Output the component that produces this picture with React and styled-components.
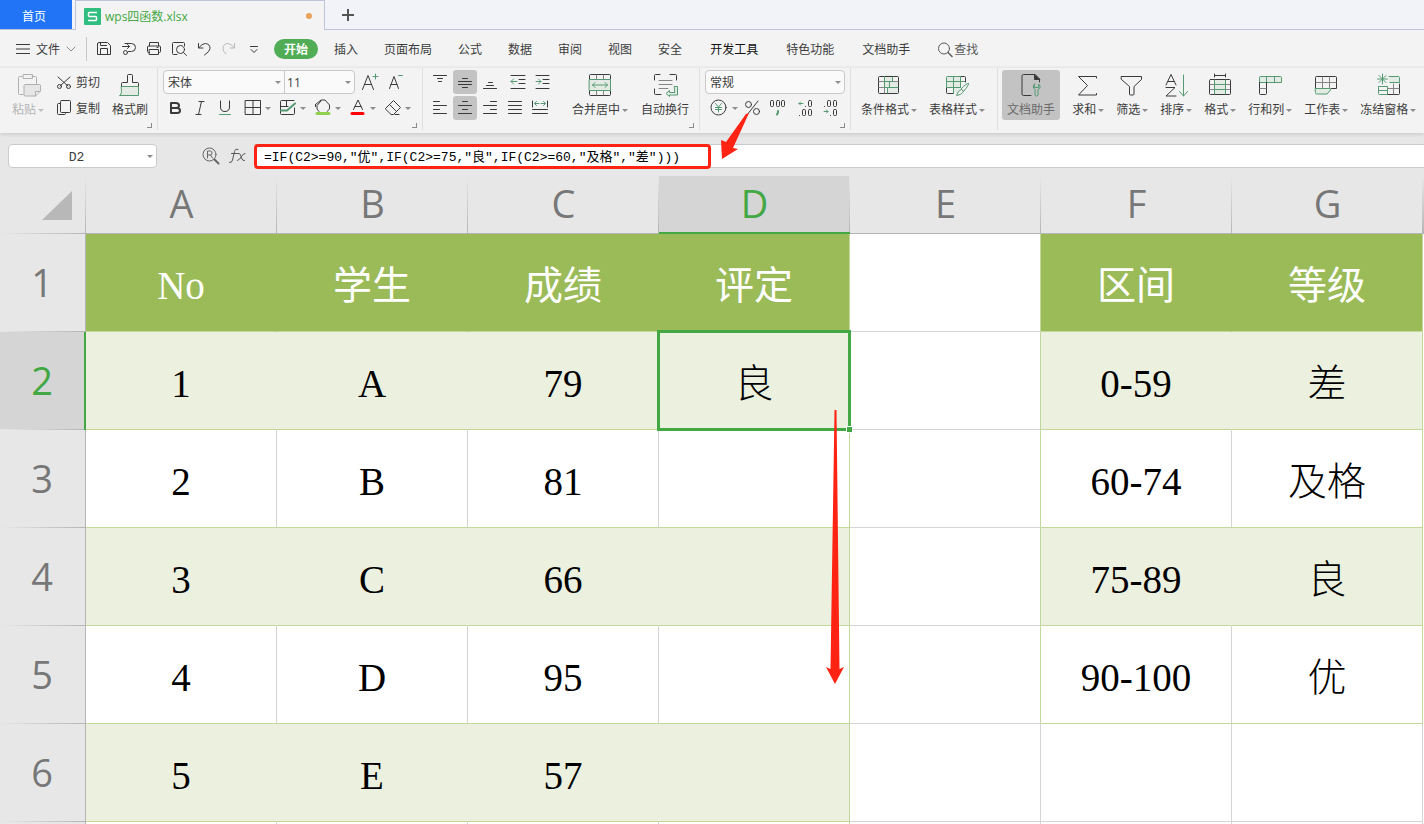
import {useState} from "react";
import styled, {createGlobalStyle} from "styled-components";

const DARK = '#3a3a3a';
const GREEN = '#559a73';
const TINT = '#e3ebe4';

const GlobalStyle = createGlobalStyle`
    * {
        box-sizing: border-box;
    }
    body {
        margin: 0;
        overflow: hidden;
        font-family: "Open Sans", "Noto Sans CJK SC", sans-serif;
        font-size: 12px;
        color: #3c3c3c;
    }
    button, input, select {
        font: inherit;
        color: inherit;
        border: none;
        background: none;
        padding: 0;
        margin: 0;
        outline: none;
    }
`

const AppWrapper = styled.div`
    position: relative;
    height: 100vh;
    display: flex;
    flex-direction: column;
    overflow: hidden;
    background: #e7e7e7;
`

/* document tabs */

const TabBar = styled.div`
    display: flex;
    flex-shrink: 0;
    height: 30px;
    background: linear-gradient(#bfc5d8, #bfc5d8) bottom / 100% 1px no-repeat #f2f3f8;
`

const HomeTab = styled.button`
    width: 72px;
    height: 29px;
    padding: 2px 4px 0 0;
    background: #2074f5;
    color: #ffffff;
`

const FileTab = styled.div`
    width: 250px;
    margin-left: 3px;
    padding: 1px 12px 0 8px;
    display: flex;
    align-items: center;
    gap: 4px;
    border: 1px solid #bfc5d8;
    border-bottom: none;
    background: #f3f3f3;
`

const FileName = styled.span`
    flex: 1;
    color: #43a843;
`

const UnsavedDot = styled.span`
    width: 6px;
    height: 6px;
    border-radius: 50%;
    background: #e8a159;
`

const NewTab = styled.button`
    width: 46px;
    height: 30px;
    display: flex;
    align-items: center;
    justify-content: center;
`

/* menu row */

const MenuBar = styled.div`
    display: flex;
    flex-shrink: 0;
    align-items: center;
    height: 38px;
    padding-left: 16px;
    background: #f3f3f3;
    white-space: nowrap;
`

const FileMenu = styled.button`
    display: flex;
    align-items: center;
    gap: 6px;
    height: 24px;
    padding-right: 10px;
    border-right: 1px solid #c8c8c8;
`

const QuickTools = styled.div`
    display: flex;
    gap: 1px;
    padding: 0 8px 0 5px;
`

const MenuTabs = styled.nav`
    display: flex;
    align-items: center;
    gap: ${props => props.$wide ? '28px' : '26px'};
    padding-left: ${props => props.$wide ? '28px' : 0};
`

const MenuTab = styled.button`
    height: 20px;
    line-height: 18px;
    padding-top: 2px;
    color: ${props => props.$dark ? '#111111' : '#3c3c3c'};
`

const ActiveMenuTab = styled(MenuTab)`
    width: 44px;
    margin-right: 16px;
    border-radius: 10px;
    background: #50ad55;
    color: #ffffff;
    font-weight: 600;
`

const SearchButton = styled(MenuTab)`
    display: flex;
    align-items: center;
    gap: 1px;
    color: #5a5a5a;
`

/* ribbon */

const Ribbon = styled.div`
    position: relative;
    z-index: 1;
    display: flex;
    flex-shrink: 0;
    height: 65px;
    background: #f3f3f3;
    box-shadow: 0 1px 4px #c4c4c4;
    white-space: nowrap;
`

const Group = styled.div`
    position: relative;
    flex-shrink: 0;
    display: flex;
    align-items: flex-start;
    gap: 12px;
    height: 62px;
    padding: 2px ${props => props.$right || '10px'} 0 ${props => props.$left || '5px'};
    border-right: ${props => props.$last ? 'none' : '1px solid #dfdfdf'};
`

const ToolSet = styled.div`
    display: flex;
    gap: 13px;
    padding-left: 8px;
`

const Launcher = styled.span`
    position: absolute;
    right: 5px;
    bottom: 2px;
    width: 5px;
    height: 5px;
    border-right: 1px solid #8a8a8a;
    border-bottom: 1px solid #8a8a8a;
`

const Stack = styled.div`
    display: flex;
    flex-direction: column;
    gap: 2px;
`

const ToolRow = styled.div`
    display: flex;
    gap: ${props => props.$gap || '1px'};
    height: 24px;
`

const IconButton = styled.button`
    width: 24px;
    height: 24px;
    display: flex;
    align-items: center;
    justify-content: center;
    border-radius: 3px;
    background: ${props => props.$active ? '#c3c3c3' : 'none'};
`

const SplitButton = styled.button`
    width: 34px;
    height: 24px;
    padding-left: 3px;
    display: flex;
    align-items: center;
`

const TextButton = styled.button`
    display: flex;
    align-items: center;
    gap: 4px;
    height: 24px;
`

const BigButton = styled.button`
    display: flex;
    flex-direction: column;
    align-items: center;
    gap: 5px;
    height: 50px;
    padding: ${props => props.$active ? '3px 5px 0' : '3px 0 0'};
    border-radius: 3px;
    background: ${props => props.$active ? '#c3c3c3' : 'none'};
    color: ${props => props.$disabled ? '#b4b4b4' : props.$active ? '#6a6a6a' : '#3c3c3c'};
`

const BigLabel = styled.span`
    display: flex;
    align-items: center;
    gap: 2px;
    line-height: 16px;
`

const SelectFrame = styled.div`
    display: flex;
    height: 24px;
    border: 1px solid #c9c9c9;
    border-radius: 4px;
    background: #fafafa;
`

const SelectBox = styled.label`
    position: relative;
    width: ${props => props.$width};
    border-left: ${props => props.$divided ? '1px solid #c9c9c9' : 'none'};
`

const Select = styled.select`
    appearance: none;
    width: 100%;
    height: 22px;
    padding-left: ${props => props.$near ? '2px' : '4px'};
    padding-top: 1px;
    line-height: 21px;
`

const SelectCaret = styled.span`
    position: absolute;
    right: 3px;
    top: 0;
    height: 22px;
    display: flex;
    align-items: center;
    pointer-events: none;
`

/* formula bar */

const FormulaBar = styled.div`
    position: relative;
    z-index: 2;
    display: flex;
    flex-shrink: 0;
    align-items: center;
    height: 43px;
    padding: 3px 0 0 8px;
`

const NameBox = styled.label`
    position: relative;
    width: 149px;
    height: 24px;
    border: 1px solid #cbcbcb;
    border-radius: 4px;
    background: #ffffff;
`

const NameInput = styled.input`
    width: 100%;
    height: 22px;
    padding: 2px 12px 0 0;
    text-align: center;
    font-family: "Liberation Mono", monospace;
    font-size: 13px;
`

const FormulaTools = styled.div`
    display: flex;
    gap: 2px;
    margin: 0 5px 0 42px;
`

const FormulaField = styled.div`
    flex: 1;
    height: 24px;
    border-top: 1px solid #cbcbcb;
    border-bottom: 1px solid #cbcbcb;
    background: #ffffff;
`

const FormulaInput = styled.input`
    display: block;
    width: 457px;
    height: 25px;
    margin-top: -1px;
    padding: 0 7px 3px;
    border: 3px solid #ff2313;
    border-radius: 4px;
    background: #ffffff;
    color: #000000;
    font-family: "Liberation Mono", "Noto Sans CJK SC", monospace;
    font-size: 13px;
`

const FormulaArrow = styled.svg`
    position: absolute;
    left: 720px;
    top: -20px;
    pointer-events: none;
`

/* sheet */

const Sheet = styled.div`
    flex: 1;
    min-height: 0;
    overflow: hidden;
    background: #e7e7e7;
`

const Table = styled.table`
    width: 100%;
    table-layout: fixed;
    border-collapse: separate;
    border-spacing: 0;
`

const RowHeadCol = styled.col`
    width: 86px;
`

const DataCol = styled.col`
    width: 191px;
`

const Corner = styled.th`
    height: 58px;
    padding: 0 14px 14px 0;
    vertical-align: bottom;
    text-align: right;
    line-height: 0;
    background:
        linear-gradient(to right, #e7e7e7, #b5b5b5) bottom / 100% 1px no-repeat,
        linear-gradient(#e7e7e7, #b5b5b5) right / 1px 100% no-repeat;
`

const ColHead = styled.th`
    height: 58px;
    padding: 0 0 4px;
    font-size: 38px;
    line-height: 52px;
    font-weight: 400;
    color: ${props => props.$active ? '#43a843' : '#777777'};
    background:
        linear-gradient(${props => props.$active ? '#43a843, #43a843' : '#b5b5b5, #b5b5b5'}) bottom / 100% ${props => props.$active ? '2px' : '1px'} no-repeat,
        linear-gradient(#e7e7e7, #b5b5b5) right / 1px 100% no-repeat
        ${props => props.$active ? '#d5d5d5' : '#e7e7e7'};
`

const RowHead = styled.th`
    height: 98px;
    padding: 0 2px 2px 0;
    font-size: 38px;
    line-height: 52px;
    font-weight: 400;
    color: ${props => props.$active ? '#43a843' : '#777777'};
    background:
        linear-gradient(${props => props.$active ? '#43a843, #43a843' : '#b5b5b5, #b5b5b5'}) right / ${props => props.$active ? '2px' : '1px'} 100% no-repeat,
        linear-gradient(to right, #e7e7e7, #b5b5b5) bottom / 100% 1px no-repeat
        ${props => props.$active ? '#d5d5d5' : '#e7e7e7'};
`

const fills = {head: '#9bbb59', band: '#ebf0df', plain: '#ffffff'};

const Cell = styled.td`
    position: relative;
    height: 98px;
    padding: 6px 0 0;
    text-align: center;
    font-family: "Liberation Serif", "Noto Sans CJK SC", serif;
    font-size: 39px;
    font-weight: ${props => props.$fill === 'head' ? 400 : 300};
    line-height: 56px;
    color: ${props => props.$fill === 'head' ? '#ffffff' : '#000000'};
    background: ${props => fills[props.$fill]};
    border-right: 1px solid ${props => props.$right};
    border-bottom: 1px solid ${props => props.$bottom};
`

const Filler = styled.td`
    background: #ffffff;
`

const Selection = styled.div`
    position: absolute;
    z-index: 1;
    left: -2px;
    right: -2px;
    top: -2px;
    bottom: -2px;
    border: 3px solid #43a843;
`

const FillHandle = styled.div`
    position: absolute;
    right: -5px;
    bottom: -5px;
    width: 7px;
    height: 7px;
    border: 1px solid #ffffff;
    background: #43a843;
`

const DragArrow = styled.svg`
    position: absolute;
    z-index: 2;
    right: 5px;
    top: 78px;
    pointer-events: none;
`

/* icons: dark strokes with green accents */

const Svg = ({w = 24, h = 24, color = DARK, children}) => (
    <svg width={w} height={h} viewBox={`0 0 ${w} ${h}`} fill="none" stroke={color} strokeLinecap="round" strokeLinejoin="round">
        {children}
    </svg>
);

const Caret = ({color = '#8c8c8c'}) => (
    <svg width="6" height="3" viewBox="0 0 6 3"><path d="M0 0h6L3 3z" fill={color}/></svg>
);

const quickIcons = [
    ['保存', <><path d="M5.500 7v10.500h13V8.500l-3-3h-8.500q-1.500 0-1.500 1.500z"/><path d="M8.500 17.500v-6h7v6M8.500 5.500v3h6"/></>],
    ['输出', <><path d="M8 6.500h6.500a4 4 0 0 1 0 8h-3M5.500 9.500h7M10.500 7.500l2 2-2 2"/><circle cx="8.500" cy="15.500" r="2"/></>],
    ['打印', <><path d="M7.500 9V5.500h9V9M7.500 15.500h-1q-1 0-1-1V10q0-1 1-1h11q1 0 1 1v4.500q0 1-1 1h-1"/><path d="M7.500 12.500h9v5h-9zM15 10.500h1"/></>],
    ['打印预览', <><path d="M17.500 9V6.500q0-1-1-1h-10q-1 0-1 1v10q0 1 1 1H10"/><circle cx="13.500" cy="12.500" r="4"/><path d="M16.500 15.500l3 3"/></>],
    ['撤销', <path d="M6.500 6.500v4.500h4.500M7 10.500q3-4 6.500-4 4.500.5 4.500 5 0 3-5.500 6.500"/>],
    ['恢复', <path stroke="#b9b9b9" d="M17.500 6.500v4.500H13M17 10.500q-3-4-6.500-4-4.500.5-4.500 5 0 3 3 5.500"/>],
    ['更多', <path d="M8.500 9.500h7M9 12.500l3 3 3-3"/>],
];

const hAlign = [
    ['左对齐', <path d="M5.500 5.500h6M5.500 9.500h13M5.500 13.500h6M5.500 17.500h13"/>],
    ['居中', <path d="M9.500 5.500h5M5.500 9.500h13M9.500 13.500h5M5.500 17.500h13"/>],
    ['右对齐', <path d="M12.500 5.500h6M5.500 9.500h13M12.500 13.500h6M5.500 17.500h13"/>],
    ['两端对齐', <path d="M5.500 5.500h13M5.500 9.500h13M5.500 13.500h13M5.500 17.500h13"/>],
    ['分散对齐', <><path d="M4.500 5v6M19.500 5v6M4.500 13.500h15M4.500 17.500h15"/><path stroke={GREEN} d="M7 7.500h4M8.500 5.500l-2 2 2 2M13 7.500h4M15.500 5.500l2 2-2 2"/></>],
];

const vAlign = [
    ['顶端对齐', <path d="M5.500 5.500h13M9.500 8.500h5M10.500 11.500h3"/>],
    ['垂直居中', <path d="M9.500 8.500h5M5.500 11.500h13M5.500 14.500h13M9.500 17.500h5"/>],
    ['底端对齐', <path d="M10.500 12.500h4M8.500 15.500h7M5.500 18.500h13"/>],
    ['减少缩进', <><path d="M8 5.500h14M16 9.500h6M16 13.500h6M8 18.500h14"/><path stroke={GREEN} d="M8 11.500h6M10.500 9l-2.500 2.500 2.500 2.500"/></>],
    ['增加缩进', <><path d="M8 5.500h13M15 9.500h6M15 13.500h6M8 18.500h13"/><path stroke={GREEN} d="M8 11.500h5M10.500 9l2.500 2.500-2.500 2.500"/></>],
];

const penIcons = [
    ['边框', <path d="M4.500 4.500h15v14h-15zM12 4.500v14M4.500 11.500h15"/>],
    ['绘图边框', <><path d="M18.500 12v5.500q0 1-1 1h-12q-1 0-1-1V5.500q0-1 1-1H18M10.500 5v5M4.500 10.500H12"/><path stroke={GREEN} strokeWidth="2" d="M5 14.500h6l8-7"/></>],
    ['填充颜色', <><path d="M4.500 8.500L10 4h4l4.500 5v4l-2.500 2.500M8 15.500L6 13V9.500l4-4.500M4.500 8.500v2"/><path stroke="#92d050" strokeWidth="3" d="M6 17.500h12"/></>],
    ['字体颜色', <><path d="M7.500 13.500l4.500-9.500 4.500 9.500M9 10.500h6"/><path stroke="#ff0000" strokeWidth="3" d="M6 17.500h11"/></>],
    ['清除', <path d="M4.500 12.500l8-8 7 7-7 7h-2zM8.500 8.500l7 7M14 18.500h4"/>],
];

const formatIcons = [
    ['条件格式', <><path fill={TINT} stroke="none" d="M8 2h8v6h6v12H11v-6H8z"/><path d="M22.500 17v2.500q0 1-1 1h-18q-1 0-1-1v-15q0-1 1-1h18q1 0 1 1V17"/><path stroke="#858585" d="M3 8.500h5M3 14.500h5M8.500 14v6M16 8.500h6"/><path stroke={GREEN} d="M8.500 3.500v11h3v5.500M8.500 8.500h8V4M12 14.500h10M13.500 8.500v6"/></>],
    ['表格样式', <><path fill={TINT} stroke="none" d="M2 3h14v17H9v-6H2z"/><path d="M2.500 14.500v5q0 1 1 1h6M17 3.500h3.500q1 0 1 1V9"/><path stroke={GREEN} d="M2.500 14.500v-10q0-1 1-1h13v11M2.500 8.500h14M2.500 14.500h14M9.500 3.500v17M16.500 8.500h4"/><path stroke={GREEN} fill="#f3f3f3" d="M24.500 10.500q1 1-5 8l-2.500-2.500q6-6.500 7.500-5.500zM17 16.500q-3 1-4.500 6 4.500 0 7-4z"/></>],
];

const dataIcons = [
    ['求和', <path d="M21.500 5V3.500h-18l9 9-9 9.500h18v-1.500"/>],
    ['筛选', <path d="M2.500 3.500h20v3l-7.500 7v7.500q0 1-1 1h-2.500q-1 0-1-1v-7.500l-8-7z"/>],
    ['排序', <><path d="M3 12l5-10.500L13 12M5 8.500h6M3 14.500h9l-9 8.500h10"/><path stroke={GREEN} d="M20.500 2v21M16.500 18.500l4 4.500 4-4.500"/></>],
    ['格式', <><path fill={TINT} stroke="none" d="M7 7h11v14H7z"/><path d="M7.500 2.500h11M7.500 1v3M18.500 1v3"/><rect x="2.500" y="6.500" width="21" height="15" rx="1"/><path stroke="#858585" d="M3 11.500h4M18.500 11.500h4M3 16.500h4M18.500 16.500h4"/><path stroke={GREEN} d="M7.500 7v14M18.500 7v14M7.500 11.500h11M7.500 16.500h11"/></>],
    ['行和列', <><path fill={TINT} stroke={GREEN} d="M3.500 3.500h20q1 0 1 1v5h-22v-5q0-1 1-1zM9.500 3.500v6M17.500 3.500v6"/><path d="M2.500 9.500v11q0 1 1 1h5q1 0 1-1v-11"/><path stroke="#858585" d="M3 15.500h6"/></>],
    ['工作表', <><path d="M2.500 15.500V4.500q0-1 1-1h19q1 0 1 1v11h-5"/><path stroke="#858585" d="M3 9.500h20M9.500 4v11M16.500 4v11"/><path stroke={GREEN} fill={TINT} d="M2.500 15.500h15v1.500l-3.500 4H3.500q-1 0-1-1z"/></>],
    ['冻结窗格', <><path fill={TINT} stroke="none" d="M14 4h10v6H14z"/><path stroke={GREEN} d="M7.500 1v10M2.500 6h10M4 2.500l7 7M11 2.500l-7 7M14 3.500h9.500q1 0 1 1v5H15M3.500 14.500v6q0 1 1 1h8v-8h-9M4 17.500h8"/><path d="M13 21.500h10.500q1 0 1-1V11"/><path stroke="#858585" d="M13 15.500h11M18.500 11v10"/></>],
];

const IconRow = ({items, active}) => (
    <ToolRow>
        {items.map(([name, art]) => (
            <IconButton key={name} aria-label={name} $active={name === active}>
                <Svg>{art}</Svg>
            </IconButton>
        ))}
    </ToolRow>
);

const Split = ({name, children}) => (
    <SplitButton aria-label={name}>
        <Svg>{children}</Svg>
        <Caret/>
    </SplitButton>
);

const Big = ({name, caret, active, disabled, children}) => (
    <BigButton $active={active} $disabled={disabled}>
        <Svg w={26}>{children}</Svg>
        <BigLabel>{name}{caret && <Caret color={disabled ? '#c0c0c0' : undefined}/>}</BigLabel>
    </BigButton>
);

const Dropdown = ({name, width, options, divided}) => (
    <SelectBox $width={width} $divided={divided}>
        <Select aria-label={name} $near={divided}>
            {options.map(option => <option key={option}>{option}</option>)}
        </Select>
        <SelectCaret><Caret/></SelectCaret>
    </SelectBox>
);

function Toolbar() {
    return (
        <Ribbon>
            <Group $left="12px" $right="9px">
                <Big name="粘贴" caret disabled>
                    <g stroke="#b0b0b0">
                        <path d="M7 3.500H4.500q-1 0-1 1v16q0 1 1 1H8M17 3.500h3.500q1 0 1 1V11M8.500 1.500h9v4h-9z"/>
                        <path fill="#e6e6e6" d="M10.500 11.500h14q1 0 1 1V18l-5 5h-10q-1.500 0-1.500-1v-9.500q0-1 1.500-1zM25 18.500h-4.500V23"/>
                    </g>
                </Big>
                <Stack>
                    <TextButton>
                        <Svg w={16} h={16}><path d="M2 3l10 9M14 3L4 12"/><circle cx="3.500" cy="12.500" r="2"/><circle cx="12.500" cy="12.500" r="2"/></Svg>
                        剪切
                    </TextButton>
                    <TextButton>
                        <Svg w={16} h={16}><path d="M4.500 3.500h-2q-1 0-1 1v9q0 1 1 1h6q1 0 1-1v-1"/><rect x="4.500" y="0.500" width="10" height="12" rx="1"/></Svg>
                        复制
                    </TextButton>
                </Stack>
                <Big name="格式刷">
                    <path fill={TINT} stroke={GREEN} d="M4.500 13.500h17v9h-19q2-1 2-3.500z"/>
                    <path d="M4.500 13v-2.500q0-1 1-1h5v-7q0-1 1-1h3q1 0 1 1v7h5q1 0 1 1V13"/>
                </Big>
                <Launcher/>
            </Group>

            <Group>
                <Stack>
                    <ToolRow $gap="2px">
                        <SelectFrame>
                            <Dropdown name="字体" width="120px" options={['宋体', '黑体', '楷体']}/>
                            <Dropdown name="字号" width="70px" options={['11', '12', '14']} divided/>
                        </SelectFrame>
                        <IconButton aria-label="增大字号">
                            <Svg><path d="M5.500 19.500l5.500-14 5.500 14M7.500 14.500h7"/><path stroke={GREEN} d="M18.500 4v5M16 6.500h5"/></Svg>
                        </IconButton>
                        <IconButton aria-label="减小字号">
                            <Svg><path d="M6.500 18.500l4.500-12 4.500 12M8 14.500h6"/><path stroke={GREEN} d="M15.500 5.500h4"/></Svg>
                        </IconButton>
                    </ToolRow>
                    <ToolRow>
                        <IconButton aria-label="加粗"><Svg><path strokeWidth="2" d="M8 7h5q3 0 3 2.500T13 12H8zM8 12h6q3 0 3 2.500T14 17H8z"/></Svg></IconButton>
                        <IconButton aria-label="倾斜"><Svg><path d="M11 5.500h5M8 18.500h5M13.500 5.500l-3 13"/></Svg></IconButton>
                        <IconButton aria-label="下划线"><Svg><path d="M7.500 5v6q0 4.500 4.500 4.500t4.500-4.500V5"/><path stroke={GREEN} d="M6.500 18.500h11"/></Svg></IconButton>
                        {penIcons.map(([name, art]) => <Split key={name} name={name}>{art}</Split>)}
                    </ToolRow>
                </Stack>
                <Launcher/>
            </Group>

            <Group>
                <Stack>
                    <IconRow items={vAlign} active="垂直居中"/>
                    <IconRow items={hAlign} active="居中"/>
                </Stack>
                <ToolSet>
                    <Big name="合并居中" caret>
                        <path fill={TINT} stroke="none" d="M2 7h22v10H2z"/>
                        <path d="M2.500 6V2.500q0-1 1-1h19q1 0 1 1V6M2.500 18v3.500q0 1 1 1h19q1 0 1-1V18"/>
                        <path stroke="#858585" d="M9.500 2v4M16.500 2v4M9.500 18v4M16.500 18v4"/>
                        <path stroke={GREEN} d="M2.500 6.500h21v11h-21zM5.500 12h15M8 9.500L5.500 12 8 14.500M18 9.500l2.500 2.500-2.500 2.500"/>
                    </Big>
                    <Big name="自动换行">
                        <path d="M2.500 7V2.500q0-1 1-1H8M18 1.500h5.500q1 0 1 1V7M2.500 16v4.500q0 1 1 1H9"/>
                        <path stroke="#858585" d="M7 7.500h13M7 11.500h13M7 15.500h9"/>
                        <path stroke={GREEN} fill={TINT} d="M22.500 13.500h3v8.500h-8v1.500l-3.500-3 3.500-3v2h5z"/>
                    </Big>
                </ToolSet>
                <Launcher/>
            </Group>

            <Group $right="5px">
                <Stack>
                    <SelectFrame>
                        <Dropdown name="数字格式" width="138px" options={['常规', '数值', '货币']}/>
                    </SelectFrame>
                    <ToolRow>
                        <Split name="货币">
                            <circle cx="10.500" cy="11.500" r="7.500"/>
                            <path stroke={GREEN} d="M7.500 7.500l3 3.500 3-3.500M10.500 11v5M7.500 11.500h6M7.500 13.500h6"/>
                        </Split>
                        <IconButton aria-label="百分比">
                            <Svg><circle cx="8.500" cy="8.500" r="3"/><circle cx="16.500" cy="15.500" r="3"/><path d="M18 5L7 19"/></Svg>
                        </IconButton>
                        <IconButton aria-label="千位分隔">
                            <Svg>
                                <rect x="5.500" y="4.500" width="3" height="6" rx="1"/><rect x="11.500" y="4.500" width="3" height="6" rx="1"/><rect x="16.500" y="4.500" width="3" height="6" rx="1"/>
                                <path stroke={GREEN} strokeWidth="2" d="M13 15v1.500l-1 2"/>
                            </Svg>
                        </IconButton>
                        <IconButton aria-label="增加小数">
                            <Svg>
                                <rect x="18.500" y="4.500" width="3" height="6" rx="1"/><rect x="12.500" y="13.500" width="3" height="6" rx="1"/><rect x="18.500" y="13.500" width="3" height="6" rx="1"/>
                                <path d="M15.500 10.500h.1M9.500 19.500h.1"/>
                                <path stroke={GREEN} d="M9 7.500h4M10.500 6L9 7.500l1.500 1.500"/>
                            </Svg>
                        </IconButton>
                        <IconButton aria-label="减少小数">
                            <Svg>
                                <rect x="12.500" y="4.500" width="3" height="6" rx="1"/><rect x="18.500" y="4.500" width="3" height="6" rx="1"/><rect x="18.500" y="13.500" width="3" height="6" rx="1"/>
                                <path d="M9.500 10.500h.1M15.500 19.500h.1"/>
                                <path stroke={GREEN} d="M9 15.500h4M11.500 14l1.500 1.500-1.500 1.500"/>
                            </Svg>
                        </IconButton>
                    </ToolRow>
                </Stack>
                <Launcher/>
            </Group>

            <Group $right="12px" $left="10px">
                {formatIcons.map(([name, art]) => <Big key={name} name={name} caret>{art}</Big>)}
            </Group>

            <Group $left="4px" $last>
                <Big name="文档助手" active>
                    <path d="M13 22.500H5.500q-1.500 0-1.500-1.500V3q0-1.500 1.500-1.500H17L21.500 6v3"/>
                    <path fill={DARK} d="M16.500 1.500v5h5z"/>
                    <path stroke={GREEN} d="M16.500 11q-2 1.500-1 4l1.500 1.500V22q1.500 2.500 3 0v-5.500L22 15q.5-2.500-1.500-4v3.500h-4z"/>
                </Big>
                {dataIcons.map(([name, art]) => <Big key={name} name={name} caret>{art}</Big>)}
            </Group>
        </Ribbon>
    );
}

/* sheet content */

const columns = ['A', 'B', 'C', 'D', 'E', 'F', 'G'];

const rows = [
    ['No', '学生', '成绩', '评定', '', '区间', '等级'],
    ['1', 'A', '79', '良', '', '0-59', '差'],
    ['2', 'B', '81', '', '', '60-74', '及格'],
    ['3', 'C', '66', '', '', '75-89', '良'],
    ['4', 'D', '95', '', '', '90-100', '优'],
    ['5', 'E', '57', '', '', '', ''],
];

const GRID = '#d4d4d4';
const LINE = '#c4d79b';

// the left table covers A-D, the right one F-G down to row 5
const inTable = (row, col) => col < 4 || (col > 4 && row < 5);

const fillOf = (row, col) => {
    if (!inTable(row, col)) return 'plain';
    if (row === 0) return 'head';
    return row % 2 ? 'band' : 'plain';
};

const rightOf = (row, col) => {
    if (col === 3 || (col === 4 && row < 5) || (col === 6 && row < 5)) return LINE;
    const fill = fillOf(row, col);
    return fill === 'plain' ? GRID : fills[fill];
};

function Grid() {
    return (
        <Table>
            <colgroup>
                <RowHeadCol/>
                {columns.map(name => <DataCol key={name}/>)}
                <col/>
            </colgroup>
            <thead>
                <tr>
                    <Corner aria-label="全选">
                        <svg width="30" height="29" viewBox="0 0 30 29"><path d="M30 0v29H0z" fill="#b8b8b8"/></svg>
                    </Corner>
                    {columns.map(name => <ColHead key={name} $active={name === 'D'}>{name}</ColHead>)}
                    <ColHead/>
                </tr>
            </thead>
            <tbody>
                {rows.map((cells, row) => (
                    <tr key={row}>
                        <RowHead $active={row === 1}>{row + 1}</RowHead>
                        {cells.map((text, col) => (
                            <Cell
                                key={col}
                                $fill={fillOf(row, col)}
                                $right={rightOf(row, col)}
                                $bottom={inTable(row, col) ? LINE : GRID}
                            >
                                {text}
                                {row === 1 && col === 3 &&
                                    <>
                                        <Selection><FillHandle/></Selection>
                                        <DragArrow width="18" height="274" viewBox="0 0 18 274">
                                            <path d="M8.500 0h2l3 259 4.500-2-9 17-9-17 4.500 2z" fill="#ff2313"/>
                                        </DragArrow>
                                    </>
                                }
                            </Cell>
                        ))}
                        <Filler/>
                    </tr>
                ))}
                <tr>
                    <RowHead/>
                    {columns.map((name, col) => (
                        <Cell key={name} $fill="plain" $right={col === 3 ? LINE : GRID} $bottom={GRID}/>
                    ))}
                    <Filler/>
                </tr>
            </tbody>
        </Table>
    );
}

function App() {
    const [cellName, setCellName] = useState('D2');
    const [formula, setFormula] = useState('=IF(C2>=90,"优",IF(C2>=75,"良",IF(C2>=60,"及格","差")))');
    return (
        <AppWrapper>
            <GlobalStyle/>
            <TabBar>
                <HomeTab>首页</HomeTab>
                <FileTab>
                    <svg width="17" height="17" viewBox="0 0 17 17">
                        <rect width="17" height="17" rx="1" fill="#2fbd80"/>
                        <path d="M13 4.500H5.500q-1 0-1 1v2q0 1 1 1h6q1 0 1 1v2q0 1-1 1H4" fill="none" stroke="#ffffff" strokeWidth="1.500"/>
                    </svg>
                    <FileName>wps四函数.xlsx</FileName>
                    <UnsavedDot/>
                </FileTab>
                <NewTab aria-label="新建">
                    <svg width="12" height="12" viewBox="0 0 12 12"><path d="M6 0v12M0 6h12" stroke="#555555" strokeWidth="2"/></svg>
                </NewTab>
            </TabBar>

            <MenuBar>
                <FileMenu>
                    <Svg w={14} h={10}><path d="M0 .5h14M0 5h14M0 9.500h14"/></Svg>
                    文件
                    <Svg w={10} h={6} color="#8c8c8c"><path d="M1 1l4 4 4-4"/></Svg>
                </FileMenu>
                <QuickTools>
                    {quickIcons.map(([name, art]) => (
                        <IconButton key={name} aria-label={name}><Svg>{art}</Svg></IconButton>
                    ))}
                </QuickTools>
                <ActiveMenuTab>开始</ActiveMenuTab>
                <MenuTabs>
                    {['插入', '页面布局', '公式', '数据', '审阅', '视图', '安全'].map(name => <MenuTab key={name}>{name}</MenuTab>)}
                </MenuTabs>
                <MenuTabs $wide>
                    <MenuTab $dark>开发工具</MenuTab>
                    <MenuTab>特色功能</MenuTab>
                    <MenuTab>文档助手</MenuTab>
                    <SearchButton>
                        <Svg w={15} h={16} color="#5a5a5a"><circle cx="6" cy="6.500" r="5.500"/><path strokeWidth="1.500" d="M10 10.500l4 4"/></Svg>
                        查找
                    </SearchButton>
                </MenuTabs>
            </MenuBar>

            <Toolbar/>

            <FormulaBar>
                <NameBox>
                    <NameInput aria-label="名称框" value={cellName} onChange={e => setCellName(e.target.value)}/>
                    <SelectCaret><Caret/></SelectCaret>
                </NameBox>
                <FormulaTools>
                    <IconButton aria-label="浏览公式结果">
                        <Svg color="#666666"><circle cx="10.500" cy="10.500" r="6.500"/><path d="M8.500 14v-7h3q1.500 0 1.500 2t-1.500 2h-3M11.500 11l2 3"/><path strokeWidth="2" d="M15.500 15.500l4 4"/></Svg>
                    </IconButton>
                    <IconButton aria-label="插入函数">
                        <Svg color="#555555"><path d="M13 5.500q-3-1-3.500 2L7.500 16q-.5 3-3 2.500M6.500 9.500h6M13 9.500q2-.5 2.500 1.500l1.500 4q.5 2 2.500 1.500M20 9.500q-2 0-3.500 3t-4 4"/></Svg>
                    </IconButton>
                </FormulaTools>
                <FormulaField>
                    <FormulaInput aria-label="编辑栏" value={formula} onChange={e => setFormula(e.target.value)}/>
                </FormulaField>
                <FormulaArrow width="30" height="46" viewBox="0 0 30 46">
                    <path d="M29 0L26 1 6 29 1 27l1 19 16-10-5-1z" fill="#ff2313"/>
                </FormulaArrow>
            </FormulaBar>

            <Sheet>
                <Grid/>
            </Sheet>
        </AppWrapper>
    );
}

export default App;
